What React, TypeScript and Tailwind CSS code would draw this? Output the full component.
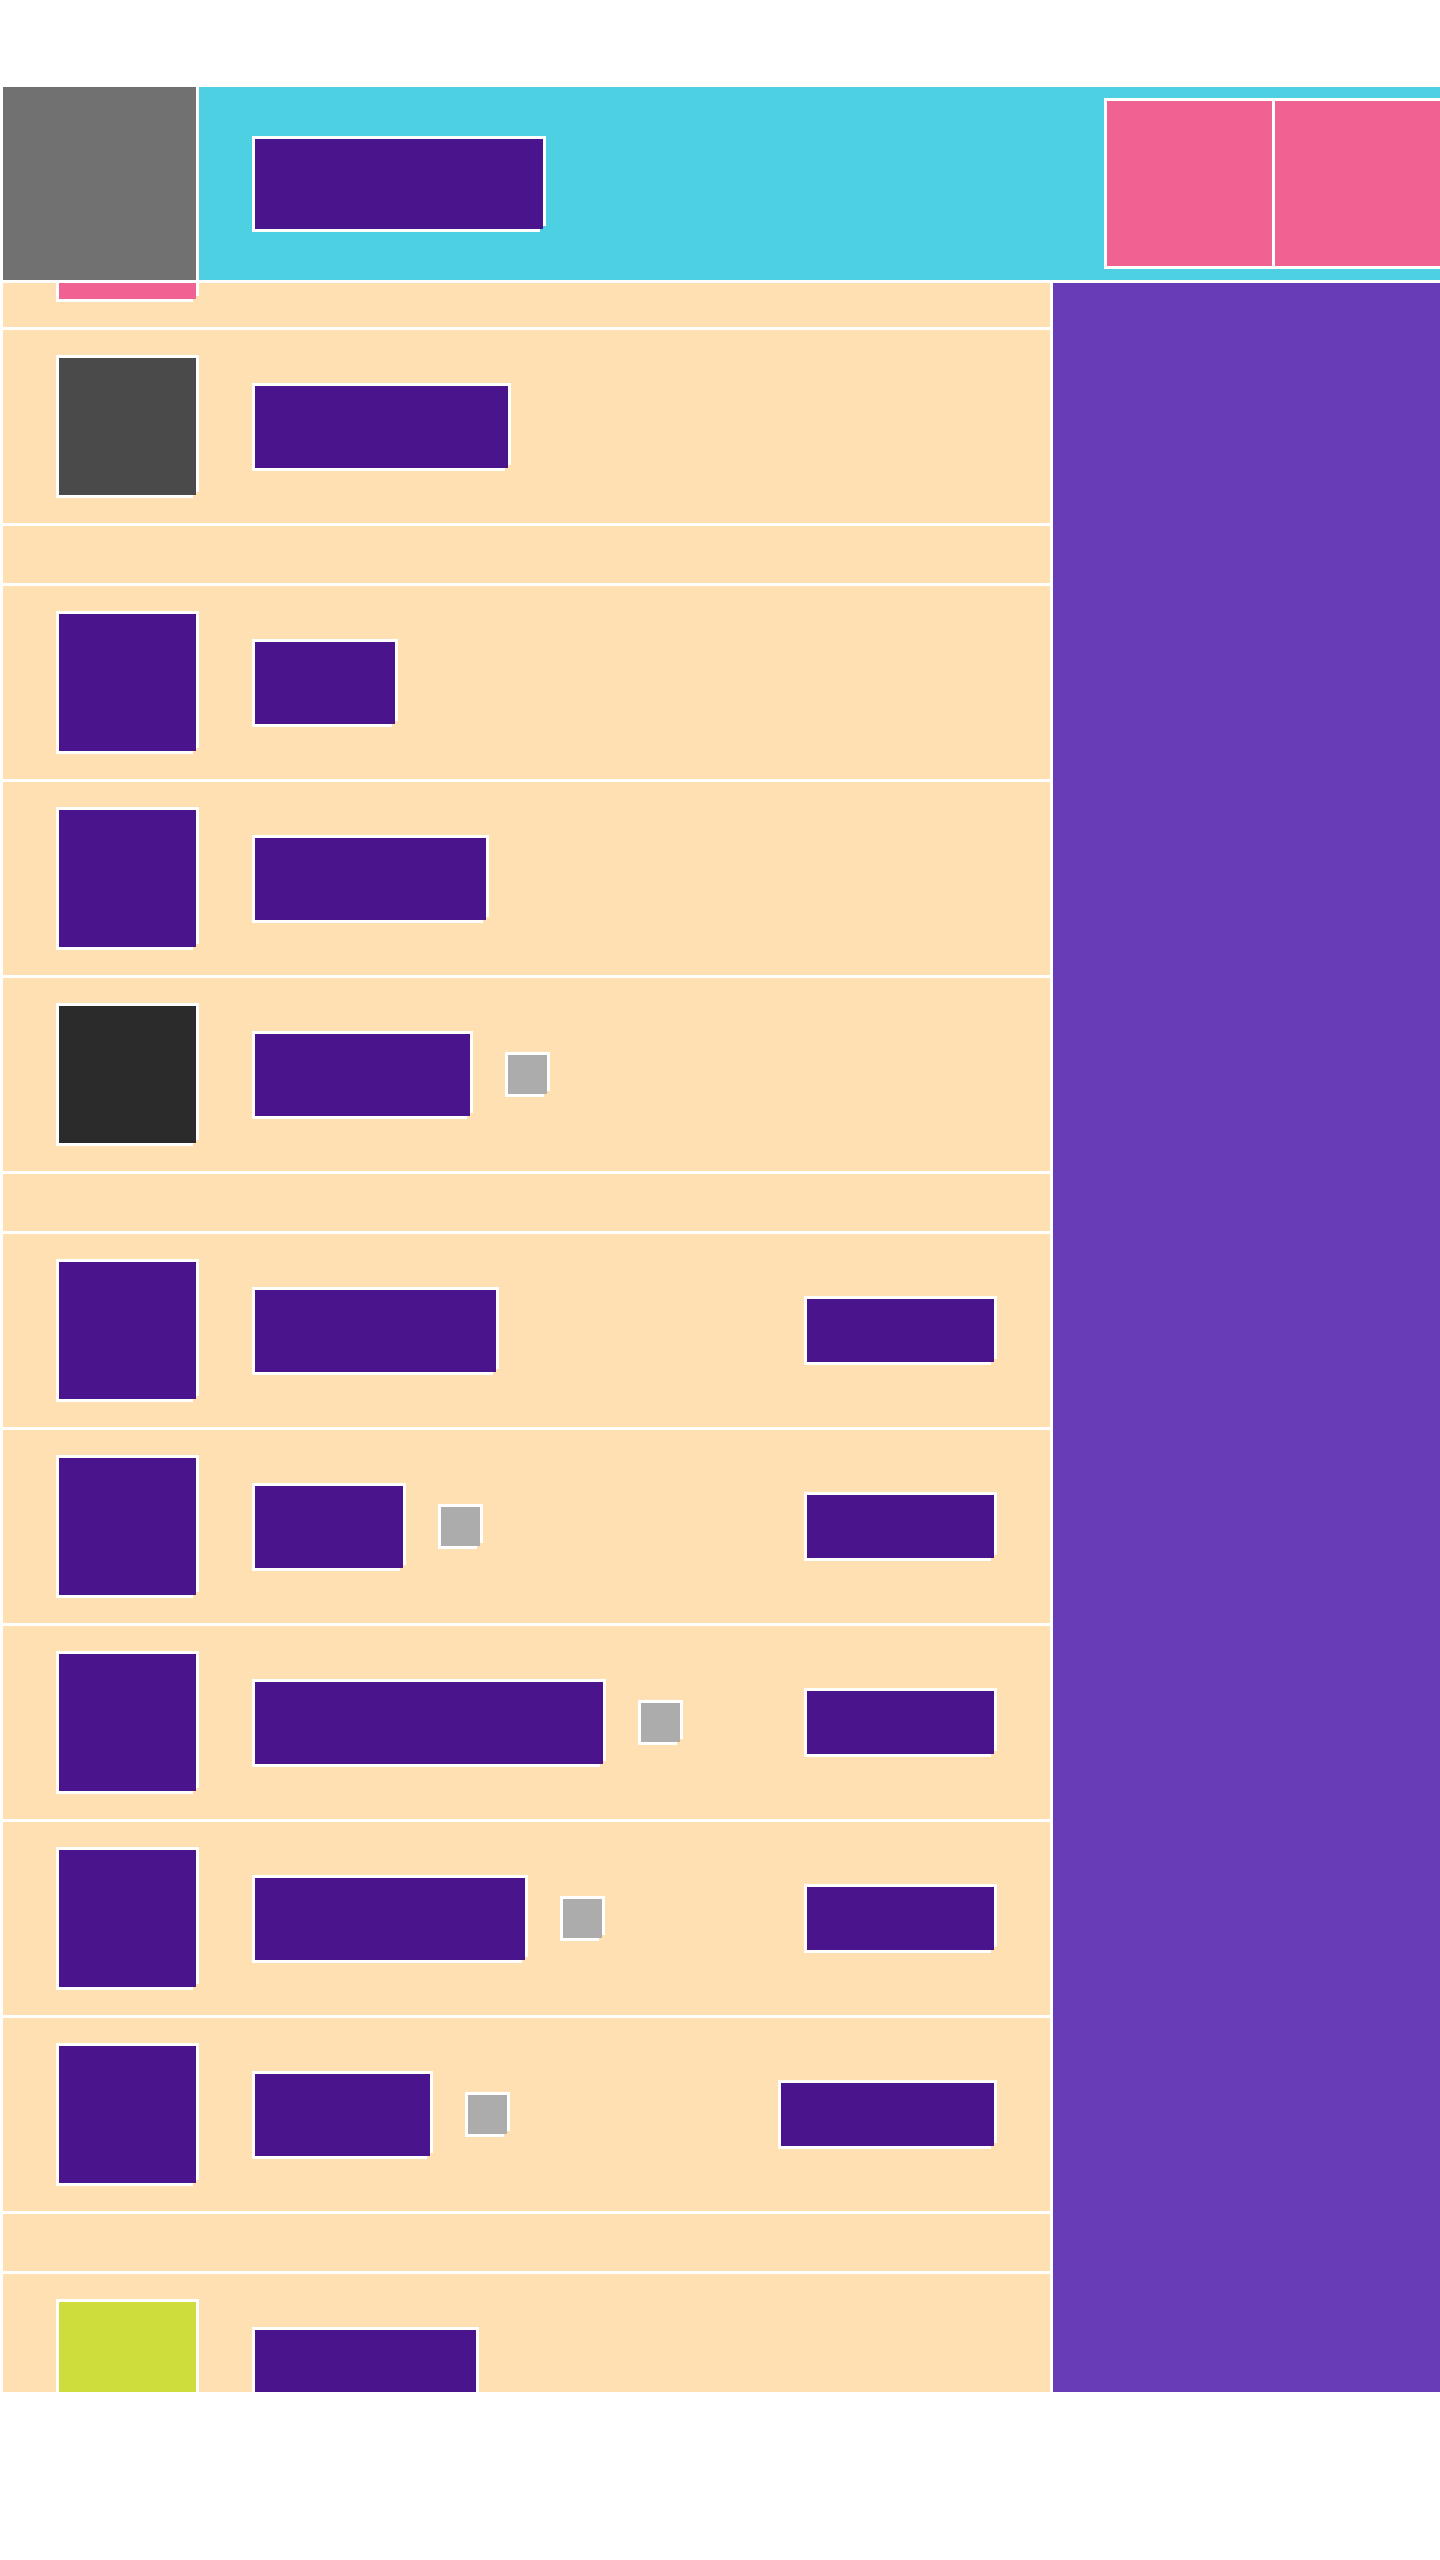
const edge = "shadow-[-3px_-3px_0_#fff,3px_-3px_0_#fff,-3px_3px_0_#fff]";

type Row =
  | { kind: "empty" }
  | {
      kind: "item";
      thumb: string;
      text: string;
      badge?: boolean;
      action?: string;
    };

const rows: Row[] = [
  { kind: "item", thumb: "bg-[#f06292]", text: "w-[200px]" },
  { kind: "item", thumb: "bg-[#4a4a4a]", text: "w-[253px]" },
  { kind: "empty" },
  { kind: "item", thumb: "bg-[#4a148c]", text: "w-[140px]" },
  { kind: "item", thumb: "bg-[#4a148c]", text: "w-[231px]" },
  { kind: "item", thumb: "bg-[#2b2b2b]", text: "w-[215px]", badge: true },
  { kind: "empty" },
  { kind: "item", thumb: "bg-[#4a148c]", text: "w-[241px]", action: "w-[187px]" },
  { kind: "item", thumb: "bg-[#4a148c]", text: "w-[148px]", badge: true, action: "w-[187px]" },
  { kind: "item", thumb: "bg-[#4a148c]", text: "w-[348px]", badge: true, action: "w-[187px]" },
  { kind: "item", thumb: "bg-[#4a148c]", text: "w-[270px]", badge: true, action: "w-[187px]" },
  { kind: "item", thumb: "bg-[#4a148c]", text: "w-[175px]", badge: true, action: "w-[213px]" },
  { kind: "empty" },
  { kind: "item", thumb: "bg-[#cfdd3c]", text: "w-[221px]" },
];

function ListRow({ row }: { row: Row }) {
  if (row.kind === "empty") {
    return <div className="h-[57px] shrink-0 bg-[#ffe0b2]" />;
  }

  return (
    <div className="flex h-[193px] shrink-0 items-center bg-[#ffe0b2] px-[56px]">
      <div className={`h-[137px] w-[137px] shrink-0 ${row.thumb} ${edge}`} />
      <div className={`ml-[59px] h-[82px] shrink-0 bg-[#4a148c] ${row.text} ${edge}`} />
      {row.badge && (
        <div className={`ml-[38px] h-[39px] w-[39px] shrink-0 bg-[#acacac] ${edge}`} />
      )}
      {row.action && (
        <div className={`ml-auto h-[63px] shrink-0 bg-[#4a148c] ${row.action} ${edge}`} />
      )}
    </div>
  );
}

export default function App() {
  return (
    <div className="h-[2560px] w-[1440px] overflow-hidden bg-white pt-[87px] pl-[3px]">
      <header className="flex h-[193px] gap-[3px]">
        <div className="h-[193px] w-[193px] shrink-0 bg-[#717171]" />
        <div className="flex flex-1 items-center overflow-hidden bg-[#4dd0e1] pl-[56px]">
          <div className={`h-[90px] w-[288px] shrink-0 bg-[#4a148c] ${edge}`} />
          <div className="-mr-[3px] ml-auto flex shrink-0 gap-[3px] bg-white p-[3px]">
            <div className="h-[165px] w-[165px] bg-[#f06292]" />
            <div className="h-[165px] w-[165px] bg-[#f06292]" />
          </div>
        </div>
      </header>

      <div className="mt-[3px] flex h-[2109px] gap-[3px]">
        <main className="w-[1047px] shrink-0 overflow-hidden bg-white">
          <div className="-mt-[149px] flex flex-col gap-[3px]">
            {rows.map((row, i) => (
              <ListRow key={i} row={row} />
            ))}
          </div>
        </main>
        <aside className="flex-1 bg-[#683bb7]" />
      </div>
    </div>
  );
}
